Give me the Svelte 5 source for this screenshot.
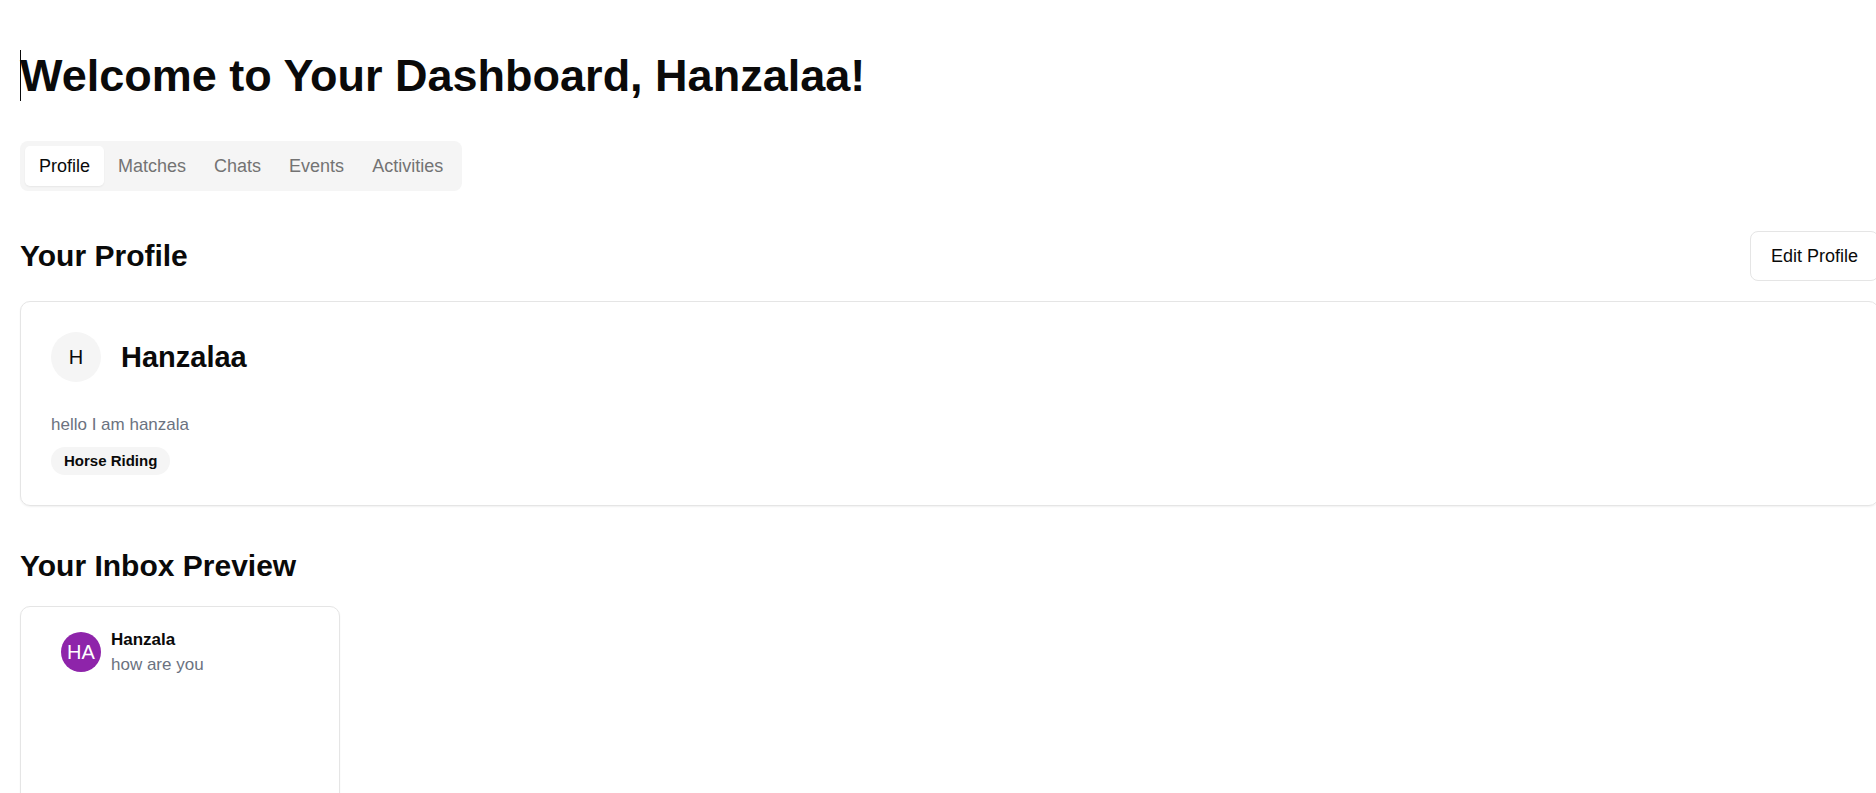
<script>
	const tabs = ['Profile', 'Matches', 'Chats', 'Events', 'Activities'];

	const user = {
		name: 'Hanzalaa',
		bio: 'hello I am hanzala',
		interests: ['Horse Riding']
	};

	const inbox = [{ name: 'Hanzala', initials: 'HA', message: 'how are you' }];

	let active = $state('Profile');
</script>

<main class="dashboard">
	<div class="content">
		<h1>Welcome to Your Dashboard, {user.name}!</h1>

		<div class="tabs" role="tablist">
			{#each tabs as tab}
				<button
					type="button"
					role="tab"
					class="tab"
					class:active={active === tab}
					aria-selected={active === tab}
					onclick={() => (active = tab)}>{tab}</button
				>
			{/each}
		</div>

		<section>
			<div class="section-head">
				<h2>Your Profile</h2>
				<button type="button" class="edit">Edit Profile</button>
			</div>

			<div class="card profile">
				<div class="person">
					<span class="avatar">{user.name[0]}</span>
					<h3>{user.name}</h3>
				</div>
				<p class="bio">{user.bio}</p>
				<div class="badges">
					{#each user.interests as interest}
						<span class="badge">{interest}</span>
					{/each}
				</div>
			</div>
		</section>

		<section>
			<h2>Your Inbox Preview</h2>

			<div class="card inbox">
				{#each inbox as chat}
					<div class="chat">
						<span class="avatar small">{chat.initials}</span>
						<div>
							<p class="sender">{chat.name}</p>
							<p class="message">{chat.message}</p>
						</div>
					</div>
				{/each}
			</div>
		</section>
	</div>
</main>

<style>
	:global(body) {
		margin: 0;
		background: #fff;
		color: #0a0a0a;
		font-family: 'Liberation Sans', Arial, sans-serif;
		font-size: 17px;
		line-height: 25px;
	}

	h1,
	h2,
	h3,
	p {
		margin: 0;
	}

	button {
		font: inherit;
		color: inherit;
		cursor: pointer;
	}

	.dashboard {
		box-sizing: border-box;
		height: 100vh;
		overflow: hidden;
		padding: 50px 0 0 20px;
	}

	/* runs slightly past the right edge of the window */
	.content {
		display: flex;
		flex-direction: column;
		gap: 40px;
		margin-right: -3px;
	}

	h1 {
		position: relative;
		font-size: 45px;
		line-height: 51px;
	}

	/* text cursor */
	h1::before {
		content: '';
		position: absolute;
		left: 0;
		top: 0;
		width: 1px;
		height: 100%;
		background: #0a0a0a;
	}

	h2 {
		font-size: 30px;
		line-height: 40px;
	}

	h3 {
		font-size: 29px;
		line-height: 40px;
	}

	.tabs {
		display: flex;
		align-self: flex-start;
		padding: 5px;
		border-radius: 8px;
		background: #f5f5f5;
	}

	.tab {
		height: 40px;
		padding: 0 14px;
		border: 0;
		border-radius: 5px;
		background: none;
		color: #737373;
		font-size: 18px;
	}

	.tab.active {
		background: #fff;
		color: #0a0a0a;
		box-shadow: 0 1px 2px rgba(0, 0, 0, 0.06);
	}

	section {
		display: flex;
		flex-direction: column;
		gap: 20px;
	}

	.section-head {
		display: flex;
		align-items: center;
		justify-content: space-between;
	}

	.edit {
		height: 50px;
		padding: 0 20px;
		border: 1px solid #e5e5e5;
		border-radius: 8px;
		background: #fff;
		font-size: 18px;
	}

	.card {
		border: 1px solid #e5e5e5;
		border-radius: 10px;
		box-shadow: 0 1px 2px rgba(0, 0, 0, 0.06);
	}

	.profile {
		padding: 30px;
	}

	.person {
		display: flex;
		align-items: center;
		gap: 20px;
		margin-bottom: 30px;
	}

	.avatar {
		display: flex;
		align-items: center;
		justify-content: center;
		width: 50px;
		height: 50px;
		border-radius: 50%;
		background: #f5f5f5;
		font-size: 20px;
	}

	.avatar.small {
		width: 40px;
		height: 40px;
		background: #8e24aa;
		color: #fff;
	}

	.bio,
	.message {
		color: #6b7280;
	}

	.badges {
		display: flex;
		gap: 10px;
		margin-top: 10px;
	}

	.badge {
		padding: 1px 13px;
		border-radius: 14px;
		background: #f5f5f5;
		font-size: 15px;
		font-weight: 600;
		line-height: 26px;
	}

	.inbox {
		box-sizing: border-box;
		width: 320px;
		height: 400px;
		padding: 20px 40px;
	}

	.chat {
		display: flex;
		align-items: center;
		gap: 10px;
	}

	.sender {
		font-weight: 600;
	}
</style>
